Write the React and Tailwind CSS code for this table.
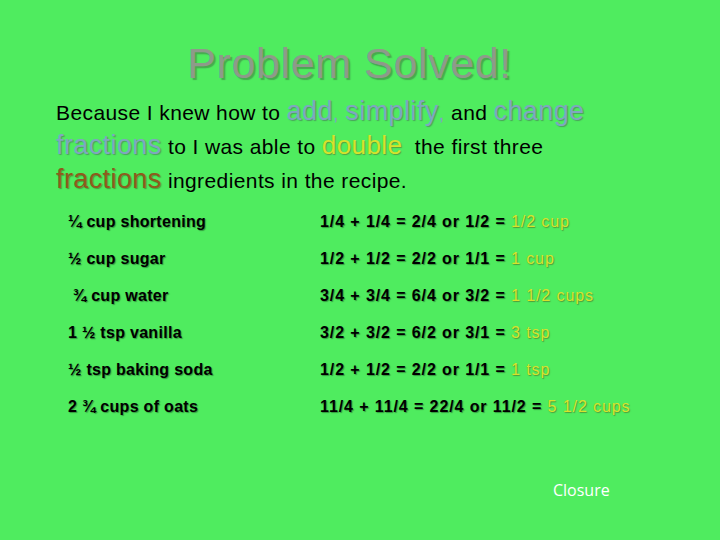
const rows = [
  { item: "¼ cup shortening", math: "1/4 + 1/4 = 2/4 or 1/2 = ", ans: "1/2 cup" },
  { item: "½ cup sugar", math: "1/2 + 1/2 = 2/2 or 1/1 = ", ans: "1 cup" },
  { item: "\u00a0¾ cup water", math: "3/4 + 3/4 = 6/4 or 3/2 = ", ans: "1 1/2 cups" },
  { item: "1 ½ tsp vanilla", math: "3/2 + 3/2 = 6/2 or 3/1 = ", ans: "3 tsp" },
  { item: "½ tsp baking soda", math: "1/2 + 1/2 = 2/2 or 1/1 = ", ans: "1 tsp" },
  { item: "2 ¾ cups of oats", math: "11/4 + 11/4 = 22/4 or 11/2 = ", ans: "5 1/2 cups" },
];

const blue = "text-[27px] leading-none text-[#7fa6c0] [text-shadow:1px_1px_1px_rgba(70,90,90,0.5)]";

export default function App() {
  return (
    <div className="w-[720px] h-[540px] bg-[#4fec5f] font-[family-name:'Liberation_Sans',Arial,sans-serif] overflow-hidden">
      {/* Title */}
      <h1 className="pt-[42px] pr-[21px] text-center text-[43px] leading-none tracking-[0.6px] text-[#8e9a8a] [text-shadow:2px_2px_1px_rgba(60,90,60,0.45)]">
        Problem Solved!
      </h1>

      {/* Intro */}
      <p className="mt-[11px] pl-[56px] text-[21px] leading-[34px] tracking-[0.4px] text-black">
        Because I knew how to <span className={blue}>add</span>
        <span className="text-[#7fa6c0]">,</span> <span className={blue}>simplify</span>
        <span className="text-[#7fa6c0]">,</span> and <span className={blue}>change</span>
        <br />
        <span className={blue}>fractions</span> to I was able to{" "}
        <span className="text-[26px] leading-none text-[#d6e22c] [text-shadow:1px_1px_1px_rgba(90,110,40,0.6)]">double</span>
        {"\u00a0 "}the first three
        <br />
        <span className="text-[27px] leading-none text-[#8f5a1c] [text-shadow:1px_1px_1px_rgba(60,60,20,0.45)]">fractions</span> ingredients in the recipe.
      </p>

      {/* Ingredients */}
      <div className="mt-[15px] pl-[68px] grid grid-cols-[252px_1fr] gap-y-[20px] text-[16px] leading-[17px] font-bold text-black [text-shadow:1px_1px_1px_rgba(0,0,0,0.35)]">
        {rows.map((r) => (
          <div key={r.item} className="contents">
            <div className="tracking-[0.3px] whitespace-pre">{r.item}</div>
            <div className="tracking-[0.9px] whitespace-pre">
              {r.math}
              <span className="font-normal text-[#d6e22c] [text-shadow:1px_1px_1px_rgba(80,100,30,0.6)]">{r.ans}</span>
            </div>
          </div>
        ))}
      </div>

      {/* Closure */}
      <div className="mt-[63px] pl-[553px] font-[family-name:'Open_Sans',sans-serif] text-[16px] text-white">Closure</div>
    </div>
  );
}
